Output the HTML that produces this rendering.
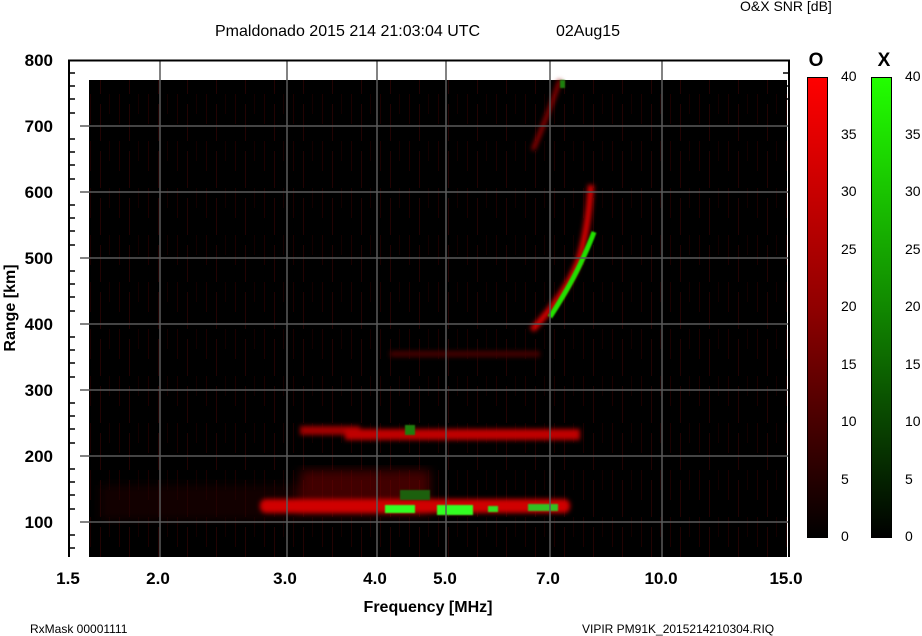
<!DOCTYPE html>
<html><head><meta charset="utf-8"><style>
html,body{margin:0;padding:0;background:#fff;width:922px;height:636px;overflow:hidden}
svg{display:block}
text{font-family:"Liberation Sans",Arial,sans-serif;fill:#000}
.b{font-weight:bold}
</style></head><body>
<svg width="922" height="636" viewBox="0 0 922 636" xmlns="http://www.w3.org/2000/svg">
<defs>
<linearGradient id="gr" x1="0" y1="0" x2="0" y2="1"><stop offset="0" stop-color="#ff0000"/><stop offset="0.5" stop-color="#900000"/><stop offset="1" stop-color="#000"/></linearGradient>
<linearGradient id="gg" x1="0" y1="0" x2="0" y2="1"><stop offset="0" stop-color="#22ff00"/><stop offset="0.5" stop-color="#118800"/><stop offset="1" stop-color="#000"/></linearGradient>
<filter id="b2"><feGaussianBlur stdDeviation="2.5"/></filter>
<filter id="b4"><feGaussianBlur stdDeviation="5"/></filter>
<filter id="b1"><feGaussianBlur stdDeviation="0.8"/></filter>
<pattern id="noise" width="29" height="47" patternUnits="userSpaceOnUse">
<rect x="3" y="0" width="1" height="30" fill="#1c0000"/>
<rect x="13" y="10" width="1" height="37" fill="#220303"/>
<rect x="22" y="0" width="1" height="20" fill="#140000"/>
</pattern>
</defs>
<text x="215" y="36" font-size="16" class="b" font-weight="normal" style="font-weight:500">Pmaldonado 2015 214 21:03:04 UTC</text>
<text x="556" y="36" font-size="16" style="font-weight:500">02Aug15</text>
<text x="740" y="11" font-size="14" fill="#222">O&amp;X SNR [dB]</text>

<rect x="89" y="80" width="698" height="477" fill="#000"/>
<rect x="89" y="80" width="698" height="477" fill="url(#noise)"/>
<g filter="url(#b4)" opacity="0.55">
<rect x="300" y="470" width="130" height="45" fill="#700"/>
<rect x="100" y="485" width="200" height="35" fill="#200"/>
</g>
<g filter="url(#b2)">
<rect x="260" y="499" width="310" height="14" rx="6" fill="#d00000"/>
<rect x="300" y="426" width="60" height="9" fill="#a00000"/>
<rect x="345" y="429" width="235" height="11" fill="#c00000"/>
<rect x="390" y="351" width="150" height="6" fill="#400"/>
<path d="M532 330 Q565 295 578 262 Q588 232 591 185" stroke="#e00000" stroke-width="6" fill="none"/>
<path d="M533 150 Q548 115 560 80" stroke="#a00000" stroke-width="4" fill="none"/>
</g>
<g filter="url(#b1)">
<path d="M550 317 Q572 283 583 258 Q590 243 594 232" stroke="#22e000" stroke-width="5" fill="none"/>
<rect x="385" y="505" width="30" height="8" fill="#30ff20"/>
<rect x="437" y="505" width="36" height="10" fill="#30ff20"/>
<rect x="488" y="506" width="10" height="6" fill="#30e020"/>
<rect x="528" y="504" width="30" height="7" fill="#30c020"/>
<rect x="400" y="490" width="30" height="10" fill="#1a6010"/>
<rect x="405" y="425" width="10" height="10" fill="#1a8010"/>
<rect x="560" y="80" width="5" height="8" fill="#1a8010"/>
</g>

<g stroke="#5a5a5a" stroke-width="1.5">
<line x1="160" y1="60" x2="160" y2="557"/><line x1="287" y1="60" x2="287" y2="557"/>
<line x1="377" y1="60" x2="377" y2="557"/><line x1="446" y1="60" x2="446" y2="557"/>
<line x1="550" y1="60" x2="550" y2="557"/><line x1="662" y1="60" x2="662" y2="557"/>
<line x1="80" y1="126" x2="788" y2="126"/><line x1="80" y1="192" x2="788" y2="192"/>
<line x1="80" y1="258" x2="788" y2="258"/><line x1="80" y1="324" x2="788" y2="324"/>
<line x1="80" y1="390" x2="788" y2="390"/><line x1="80" y1="456" x2="788" y2="456"/>
<line x1="80" y1="522" x2="788" y2="522"/>
</g>
<g stroke="#000" stroke-width="2" fill="none">
<path d="M69 557 V60.5 H789 V557"/>
</g>
<g stroke="#000" stroke-width="1.5">
<line x1="69" y1="73" x2="75" y2="73"/><line x1="69" y1="86" x2="75" y2="86"/><line x1="69" y1="99" x2="75" y2="99"/><line x1="69" y1="113" x2="75" y2="113"/>
<line x1="69" y1="139" x2="75" y2="139"/><line x1="69" y1="152" x2="75" y2="152"/><line x1="69" y1="165" x2="75" y2="165"/><line x1="69" y1="179" x2="75" y2="179"/>
<line x1="69" y1="205" x2="75" y2="205"/><line x1="69" y1="218" x2="75" y2="218"/><line x1="69" y1="231" x2="75" y2="231"/><line x1="69" y1="245" x2="75" y2="245"/>
<line x1="69" y1="271" x2="75" y2="271"/><line x1="69" y1="284" x2="75" y2="284"/><line x1="69" y1="297" x2="75" y2="297"/><line x1="69" y1="311" x2="75" y2="311"/>
<line x1="69" y1="337" x2="75" y2="337"/><line x1="69" y1="350" x2="75" y2="350"/><line x1="69" y1="363" x2="75" y2="363"/><line x1="69" y1="377" x2="75" y2="377"/>
<line x1="69" y1="403" x2="75" y2="403"/><line x1="69" y1="416" x2="75" y2="416"/><line x1="69" y1="429" x2="75" y2="429"/><line x1="69" y1="443" x2="75" y2="443"/>
<line x1="69" y1="469" x2="75" y2="469"/><line x1="69" y1="482" x2="75" y2="482"/><line x1="69" y1="495" x2="75" y2="495"/><line x1="69" y1="509" x2="75" y2="509"/>
<line x1="69" y1="535" x2="75" y2="535"/><line x1="69" y1="548" x2="75" y2="548"/>
<line x1="783" y1="73" x2="789" y2="73"/><line x1="783" y1="86" x2="789" y2="86"/><line x1="783" y1="99" x2="789" y2="99"/>
</g>
<g font-size="17" text-anchor="end" class="b">
<text x="53" y="66">800</text><text x="53" y="132">700</text><text x="53" y="198">600</text>
<text x="53" y="264">500</text><text x="53" y="330">400</text><text x="53" y="396">300</text>
<text x="53" y="462">200</text><text x="53" y="528">100</text>
</g>
<g font-size="17" text-anchor="middle" class="b">
<text x="68" y="584">1.5</text><text x="158" y="584">2.0</text><text x="285" y="584">3.0</text>
<text x="375" y="584">4.0</text><text x="445" y="584">5.0</text><text x="548" y="584">7.0</text>
<text x="661" y="584">10.0</text><text x="786" y="584">15.0</text>
</g>
<text x="428" y="612" font-size="16" text-anchor="middle" style="font-weight:bold">Frequency [MHz]</text>
<text transform="translate(15,308) rotate(-90)" font-size="16" text-anchor="middle" class="b">Range [km]</text>
<text x="30" y="633" font-size="12">RxMask 00001111</text>
<text x="582" y="633" font-size="12">VIPIR  PM91K_2015214210304.RIQ</text>

<text x="816" y="66" font-size="19" text-anchor="middle" class="b">O</text>
<text x="884" y="66" font-size="19" text-anchor="middle" class="b">X</text>
<rect x="807.5" y="77.5" width="20" height="460" fill="url(#gr)" stroke="#000"/>
<rect x="871.5" y="77.5" width="20" height="460" fill="url(#gg)" stroke="#000"/>
<g font-size="14" fill="#222">
<text x="841" y="81">40</text><text x="841" y="139">35</text><text x="841" y="196">30</text><text x="841" y="254">25</text>
<text x="841" y="311">20</text><text x="841" y="369">15</text><text x="841" y="426">10</text><text x="841" y="484">5</text><text x="841" y="541">0</text>
<text x="905" y="81">40</text><text x="905" y="139">35</text><text x="905" y="196">30</text><text x="905" y="254">25</text>
<text x="905" y="311">20</text><text x="905" y="369">15</text><text x="905" y="426">10</text><text x="905" y="484">5</text><text x="905" y="541">0</text>
</g>
</svg>
</body></html>
